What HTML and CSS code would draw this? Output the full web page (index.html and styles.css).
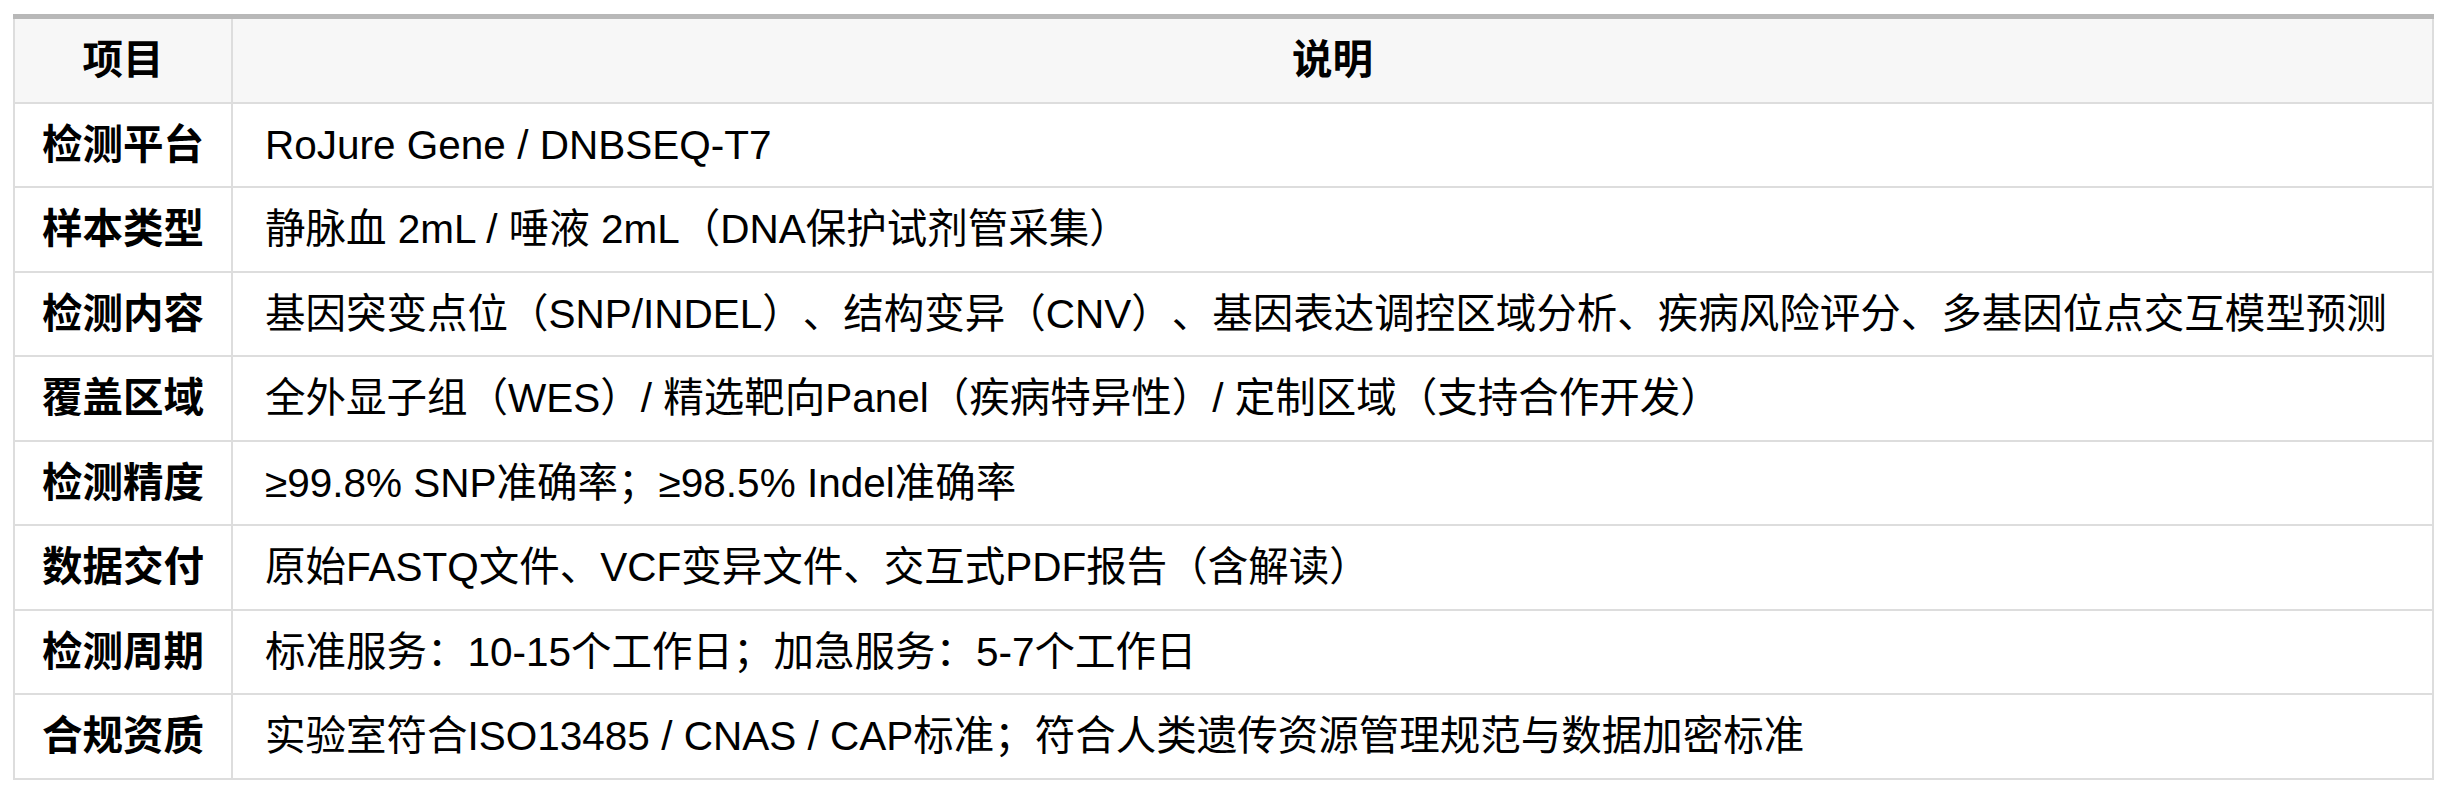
FILE: index.html
```html
<!DOCTYPE html>
<html lang="zh-CN">
<head>
<meta charset="utf-8">
<title>检测服务说明</title>
<link rel="stylesheet" href="styles.css">
</head>
<body>
<table class="spec-table">
  <thead>
    <tr>
      <th class="col-item">项目</th>
      <th class="col-desc">说明</th>
    </tr>
  </thead>
  <tbody>
    <tr><td class="label">检测平台</td><td class="desc">RoJure Gene / DNBSEQ-T7</td></tr>
    <tr><td class="label">样本类型</td><td class="desc">静脉血 2mL / 唾液 2mL（DNA保护试剂管采集）</td></tr>
    <tr><td class="label">检测内容</td><td class="desc">基因突变点位（SNP/INDEL）、结构变异（CNV）、基因表达调控区域分析、疾病风险评分、多基因位点交互模型预测</td></tr>
    <tr><td class="label">覆盖区域</td><td class="desc">全外显子组（WES）/ 精选靶向Panel（疾病特异性）/ 定制区域（支持合作开发）</td></tr>
    <tr><td class="label">检测精度</td><td class="desc">≥99.8% SNP准确率；≥98.5% Indel准确率</td></tr>
    <tr><td class="label">数据交付</td><td class="desc">原始FASTQ文件、VCF变异文件、交互式PDF报告（含解读）</td></tr>
    <tr><td class="label">检测周期</td><td class="desc">标准服务：10-15个工作日；加急服务：5-7个工作日</td></tr>
    <tr><td class="label">合规资质</td><td class="desc">实验室符合ISO13485 / CNAS / CAP标准；符合人类遗传资源管理规范与数据加密标准</td></tr>
  </tbody>
</table>
</body>
</html>
```

FILE: styles.css
```css
html, body {
  margin: 0;
  background: #ffffff;
}

body {
  padding: 14px 14px 0 13px;
  font-family: "Liberation Sans", "Noto Sans CJK SC", sans-serif;
  font-size: 40.5px;
  color: #000000;
  text-spacing-trim: space-all;
}

.spec-table {
  width: 100%;
  border-collapse: collapse;
}

.spec-table th,
.spec-table td {
  border: 2px solid #dddddd;
  line-height: 60px;
  padding: 11px 29px 11.5px;
  white-space: nowrap;
}

.spec-table thead th {
  background: #f7f7f7;
  font-weight: bold;
  text-align: center;
  border-top: 5px solid #b8b8b8;
}

.spec-table .col-item {
  width: 1%;
  padding-left: 27px;
  padding-right: 27px;
}

.spec-table td.label {
  font-weight: bold;
  text-align: center;
  padding-left: 27px;
  padding-right: 27px;
}

.spec-table td.desc {
  text-align: left;
  padding-left: 32px;
}
```
